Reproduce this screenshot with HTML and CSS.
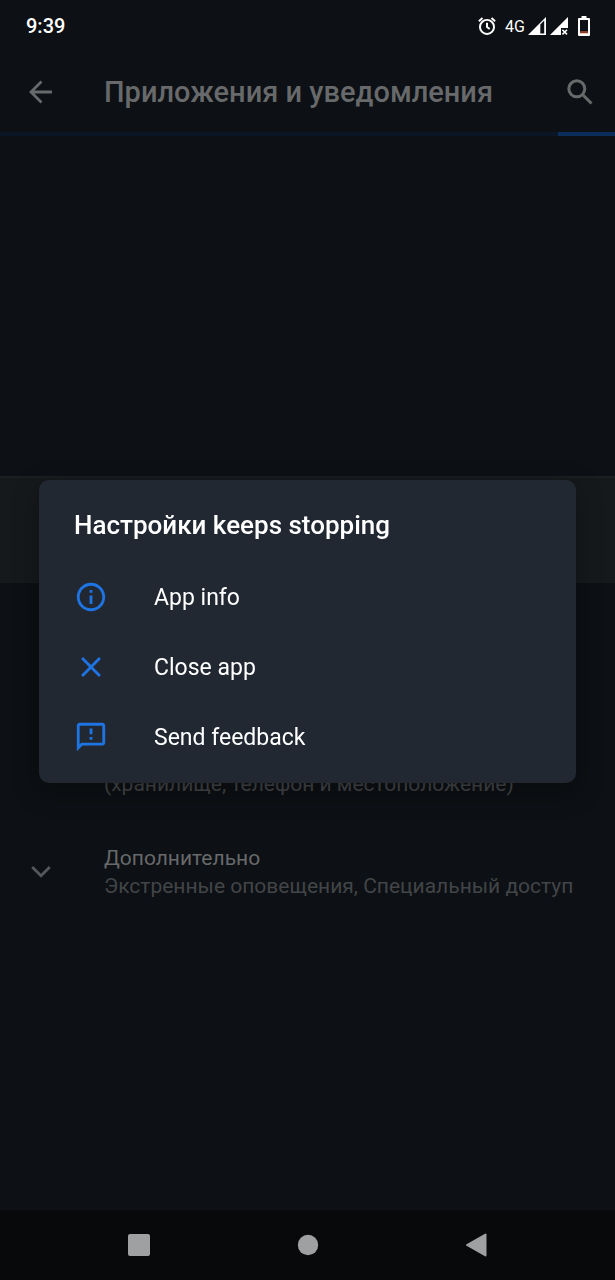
FILE: index.html
```html
<!DOCTYPE html>
<html lang="ru">
<head>
  <meta charset="UTF-8">
  <meta name="viewport" content="width=device-width, initial-scale=1">
  <title>Приложения и уведомления</title>
  <link rel="stylesheet" href="styles.css">
</head>
<body>
  <!-- Status bar -->
  <div class="status-bar">
    <span class="clock">9:39</span>
    <div class="status-icons">
      <svg class="alarm" width="18" height="18" viewBox="0 0 20 20" fill="none" stroke="#fff" stroke-width="2.200">
        <circle cx="10" cy="11" r="7.800"/>
        <path d="M10 6.500V11l3 2.400M1 4.600L5 1.200M19 4.600L15 1.200"/>
      </svg>
      <span class="network">4G</span>
      <svg class="signal" width="18" height="18" viewBox="0 0 18 18">
        <path d="M0 18L18 0V18Z" fill="#fff"/>
        <path d="M12.300 7.500L16.200 3.600V16.400H12.300Z" fill="#0d1014"/>
      </svg>
      <svg class="signal-off" width="18" height="18" viewBox="0 0 18 18">
        <path d="M0 18L18 0V11H11V18Z" fill="#fff"/>
        <path d="M12.400 12.800L17 17.400M17 12.800L12.400 17.400" stroke="#fff" stroke-width="1.600"/>
      </svg>
      <svg width="12" height="20" viewBox="0 0 12 20">
        <path d="M3.500 0H8.500V2H11a1 1 0 0 1 1 1V19a1 1 0 0 1-1 1H1a1 1 0 0 1-1-1V3a1 1 0 0 1 1-1H3.500Z" fill="#fff"/>
        <path d="M2 4H10V16H2Z" fill="#0d1014"/>
        <path d="M2 15H10V17H2Z" fill="#8a3f2c"/>
        <path d="M2 17H10V18H2Z" fill="#f4c6b4"/>
      </svg>
    </div>
  </div>

  <!-- Toolbar -->
  <header class="toolbar">
    <button type="button" class="icon-btn" aria-label="Назад">
      <svg width="24" height="24" viewBox="0 0 24 24" fill="none" stroke="#67696b" stroke-width="2.800">
        <path d="M24 12H3.500M13.500 1.500L3 12L13.500 22.500"/>
      </svg>
    </button>
    <h1>Приложения и уведомления</h1>
    <button type="button" class="icon-btn" aria-label="Поиск">
      <svg width="26" height="26" viewBox="0 0 26 26" fill="none" stroke="#67696b" stroke-width="3">
        <circle cx="9.800" cy="9.800" r="8"/>
        <path d="M15.500 15.500L24.500 24.500"/>
      </svg>
    </button>
  </header>
  <div class="progress"><div class="progress-bar"></div></div>

  <!-- Settings list -->
  <main>
    <div class="band"></div>
    <div class="pref pref-permissions">
      <p class="pref-summary">(хранилище, телефон и местоположение)</p>
    </div>
    <div class="pref pref-more">
      <svg class="chevron" width="20" height="14" viewBox="0 0 20 14" fill="none" stroke="#55585b" stroke-width="2.800">
        <path d="M1.200 2L10 10.800L18.800 2"/>
      </svg>
      <div>
        <p class="pref-title">Дополнительно</p>
        <p class="pref-summary">Экстренные оповещения, Специальный доступ</p>
      </div>
    </div>
  </main>

  <!-- Navigation bar -->
  <nav class="nav-bar">
    <button type="button" aria-label="Недавние">
      <svg width="24" height="24" viewBox="0 0 24 24" fill="#9fa0a1"><rect x="1" y="1" width="22" height="22" rx="2"/></svg>
    </button>
    <button type="button" aria-label="Домой">
      <svg width="24" height="24" viewBox="0 0 24 24" fill="#9fa0a1"><circle cx="12" cy="12" r="10.200"/></svg>
    </button>
    <button type="button" aria-label="Назад">
      <svg width="24" height="24" viewBox="0 0 24 24" fill="#9fa0a1" stroke="#9fa0a1" stroke-width="2" stroke-linejoin="round"><path d="M2 12L20.500 1.500V22.500Z"/></svg>
    </button>
  </nav>

  <!-- Crash dialog -->
  <div class="overlay">
    <div class="dialog" role="dialog" aria-labelledby="dialog-title">
      <h2 id="dialog-title">Настройки keeps stopping</h2>
      <button type="button" class="action">
        <svg width="34" height="34" viewBox="0 0 24 24" fill="#1f74e4">
          <path d="M11 7h2v2h-2zm0 4h2v6h-2zm1-9C6.480 2 2 6.480 2 12s4.480 10 10 10 10-4.480 10-10S17.520 2 12 2zm0 18c-4.410 0-8-3.590-8-8s3.590-8 8-8 8 3.590 8 8-3.590 8-8 8z"/>
        </svg>
        App info
      </button>
      <button type="button" class="action">
        <svg width="34" height="34" viewBox="0 0 24 24" fill="#1f74e4">
          <path d="M19 6.410L17.590 5 12 10.590 6.410 5 5 6.410 10.590 12 5 17.590 6.410 19 12 13.410 17.590 19 19 17.590 13.410 12z"/>
        </svg>
        Close app
      </button>
      <button type="button" class="action">
        <svg width="34" height="34" viewBox="0 0 24 24" fill="#1f74e4">
          <path d="M20 2H4c-1.100 0-1.990.9-1.990 2L2 22l4-4h14c1.100 0 2-.9 2-2V4c0-1.100-.9-2-2-2zm0 14H5.170L4 17.170V4h16v12zM11 12h2v2h-2zm0-6h2v4h-2z"/>
        </svg>
        Send feedback
      </button>
    </div>
  </div>
</body>
</html>
```
FILE: styles.css
```css
* {
  box-sizing: border-box;
}
body {
  font-family: Roboto, "Noto Sans", sans-serif;
  background-color: #0d1014;
  margin: 0;
  min-height: 100vh;
  display: flex;
  flex-direction: column;
}
h1, h2, p {
  margin: 0;
}
button {
  font-family: inherit;
  background: none;
  border: none;
  padding: 0;
  cursor: pointer;
}
svg {
  display: block;
  flex-shrink: 0;
}
.status-bar {
  height: 52px;
  padding: 0 25px 0 26px;
  display: flex;
  align-items: center;
  justify-content: space-between;
  color: white;
}
.clock {
  font-size: 20px;
  font-weight: 500;
}
.status-icons {
  display: flex;
  align-items: center;
}
.network {
  font-size: 16px;
  margin: 0 3px 0 9px;
}
.signal {
  margin-right: 4px;
}
.signal-off {
  margin-right: 10px;
}
.toolbar {
  height: 80px;
  padding: 0 22px 0 28px;
  display: flex;
  align-items: center;
}
.toolbar h1 {
  flex: 1;
  margin-left: 52px;
  font-size: 29px;
  font-weight: 500;
  color: #67696b;
}
.progress {
  height: 4px;
  background-color: #0a1625;
}
.progress-bar {
  width: 57px;
  height: 4px;
  margin-left: auto;
  background-color: #0b2d5c;
}
main {
  flex: 1;
  padding-top: 340px;
}
.band {
  height: 107px;
  background-color: #16191c;
  border-top: 2px solid #1b1e21;
}
.pref {
  padding-left: 104px;
  font-size: 21px;
  line-height: 28px;
}
.pref-permissions {
  padding-top: 187px;
}
.pref-more {
  display: flex;
  align-items: center;
  padding-left: 31px;
  margin-top: 46px;
}
.chevron {
  margin-right: 53px;
}
.pref-title {
  color: #67696b;
}
.pref-summary {
  color: #424548;
}
.nav-bar {
  height: 70px;
  padding: 0 54px;
  display: flex;
  align-items: center;
  justify-content: space-around;
  background-color: #08090a;
}
.overlay {
  position: fixed;
  inset: 0;
  padding: 52px 39px 70px;
  display: flex;
  align-items: center;
}
.dialog {
  width: 100%;
  padding: 28px 0 10px;
  background-color: #212832;
  border-radius: 10px;
  box-shadow: 0 8px 28px rgba(0,0,0,0.3);
}
.dialog h2 {
  padding: 0 35px;
  margin-bottom: 21px;
  font-size: 26px;
  line-height: 34px;
  font-weight: 500;
  color: white;
}
.action {
  width: 100%;
  padding: 18px 35px;
  display: flex;
  align-items: center;
  gap: 46px;
  font-size: 23px;
  color: white;
  text-align: left;
}
.action svg {
  margin: -1px 0 1px;
}
```
